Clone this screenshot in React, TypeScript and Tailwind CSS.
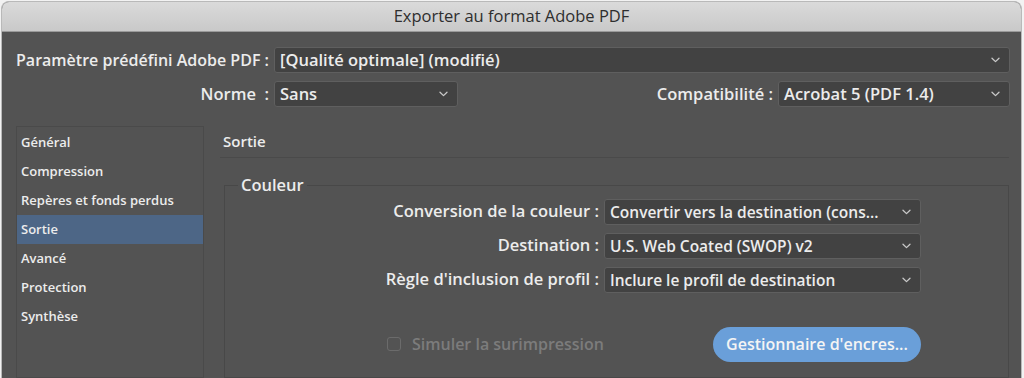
import React from "react";

const font = { fontFamily: "'Open Sans', Lato, sans-serif" };

function Chevron() {
  return (
    <svg width="9" height="6" viewBox="0 0 9 6" className="shrink-0">
      <path d="M1 1.2 L4.5 4.6 L8 1.2" fill="none" stroke="#c9c9c9" strokeWidth="1.3" strokeLinecap="round" strokeLinejoin="round" />
    </svg>
  );
}

function Select({ value, className }: { value: string; className: string }) {
  return (
    <div
      className={
        "flex h-[26px] items-center justify-between rounded-[3px] border border-[#5f5f5f] bg-[#424242] pl-[5px] pr-[9px] font-semibold text-[#ececec] " +
        className
      }
    >
      <span className="whitespace-nowrap leading-[22px]">{value}</span>
      <Chevron />
    </div>
  );
}

const nav = ["Général", "Compression", "Repères et fonds perdus", "Sortie", "Avancé", "Protection", "Synthèse"];

export default function App() {
  return (
    <div className="h-[378px] w-[1024px] overflow-hidden bg-[#f2f2f2]" style={font}>
      <div className="ml-[1px] mt-[1px] flex h-[377px] w-[1021px] flex-col overflow-hidden rounded-t-[8px] border-x border-t border-[#b9b9b9] bg-[#535353]">
        <div className="flex h-[30px] shrink-0 items-center justify-center border-b border-[#9a9a9a] bg-gradient-to-b from-[#dadada] to-[#c9c9c9] text-[16.5px] text-[#2e2e2e]">
          Exporter au format Adobe PDF
        </div>
        <div className="flex flex-col pr-[11px] pt-[15px] font-semibold text-[#ececec]">
          <div className="flex items-center">
            <div className="w-[272px] shrink-0 whitespace-nowrap pr-[5px] text-right text-[16px]">Paramètre prédéfini Adobe PDF :</div>
            <Select value="[Qualité optimale] (modifié)" className="flex-1 text-[16.5px]" />
          </div>
          <div className="mt-[8px] flex items-center">
            <div className="w-[272px] shrink-0 whitespace-nowrap pr-[5px] text-right text-[16.5px]">Norme&nbsp; :</div>
            <Select value="Sans" className="w-[184px] text-[16.5px]" />
            <div className="flex-1 whitespace-nowrap pr-[5px] text-right text-[16.5px]">Compatibilité :</div>
            <Select value="Acrobat 5 (PDF 1.4)" className="w-[232px] text-[16.5px]" />
          </div>
        </div>
        <div className="mt-[19px] flex flex-1">
          <div className="ml-[14px] flex w-[188px] shrink-0 flex-col border border-[#4a4a4a] pt-[1px] text-[13px] font-semibold text-[#ececec]">
            {nav.map((n) => (
              <div
                key={n}
                className={"flex h-[29px] items-center whitespace-nowrap pl-[4px] " + (n === "Sortie" ? "bg-[#4d6686]" : "")}
              >
                {n}
              </div>
            ))}
          </div>
          <div className="ml-[16px] flex flex-1 flex-col pr-[12px]">
            <div className="border-b border-[#4a4a4a] pb-[4px] pl-[3px] pt-[4px] text-[15px] font-semibold text-[#ececec]">Sortie</div>
            <div className="relative ml-[4px] mt-[27px] flex-1 border border-[#484848] pt-[13px]">
              <div className="absolute left-[13px] top-[-13px] bg-[#535353] px-[3px] text-[16.5px] font-semibold text-[#ececec]">Couleur</div>
              <div className="flex flex-col gap-[8px] text-[16.5px] font-semibold text-[#ececec]">
                <div className="flex items-center">
                  <div className="w-[379px] shrink-0 whitespace-nowrap pr-[5px] text-right">Conversion de la couleur :</div>
                  <Select value="Convertir vers la destination (cons..." className="w-[317px] text-[15.5px]" />
                </div>
                <div className="flex items-center">
                  <div className="w-[379px] shrink-0 whitespace-nowrap pr-[5px] text-right">Destination :</div>
                  <Select value="U.S. Web Coated (SWOP) v2" className="w-[317px] text-[15.5px]" />
                </div>
                <div className="flex items-center">
                  <div className="w-[379px] shrink-0 whitespace-nowrap pr-[5px] text-right">Règle d'inclusion de profil :</div>
                  <Select value="Inclure le profil de destination" className="w-[317px] text-[15.5px]" />
                </div>
              </div>
              <div className="mt-[34px] flex w-[696px] items-center justify-between pl-[162px]">
                <div className="flex items-center">
                  <div className="h-[14px] w-[14px] rounded-[3px] border border-[#6b6b6b]" />
                  <span className="ml-[11px] whitespace-nowrap text-[16px] font-semibold text-[#7c7c7c]">Simuler la surimpression</span>
                </div>
                <div className="flex h-[35px] w-[208px] items-center justify-center whitespace-nowrap rounded-full bg-[#6a9fd9] text-[16px] font-semibold text-[#f4f4f4]">
                  Gestionnaire d'encres...
                </div>
              </div>
            </div>
          </div>
        </div>
      </div>
    </div>
  );
}
